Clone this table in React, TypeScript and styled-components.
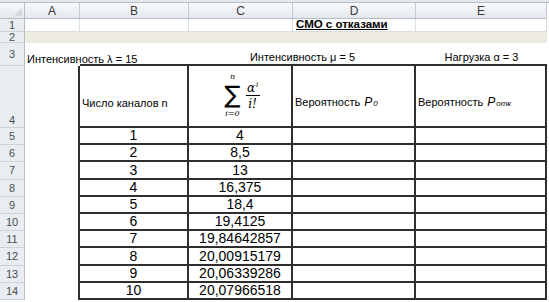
import React from 'react';
import styled, { createGlobalStyle } from 'styled-components';

const GlobalStyle = createGlobalStyle`
  html, body {
    margin: 0;
    padding: 0;
    background: #ffffff;
  }
  body {
    font-family: "Liberation Sans", Arial, sans-serif;
  }
`;

const Window = styled.div`
  width: 549px;
  height: 302px;
  overflow: hidden;
  background: #ffffff;
`;

const TopStrip = styled.div`
  height: 3px;
  box-sizing: border-box;
  background: #e3e7ec;
  border-bottom: 1px solid #b8c0ca;
`;

const Sheet = styled.div`
  display: grid;
  grid-template-columns: 25px 55px 109px 104px 123px 131px;
  grid-template-rows: 16px 13px 11px 23px 62px repeat(10, 17.2px);
  font-size: 11px;
  color: #000;
`;

const Corner = styled.div`
  position: relative;
  background: linear-gradient(#f7f8fa, #e4e8ed);
  border-right: 1px solid #b3bcc7;
  border-bottom: 1px solid #b3bcc7;
  box-sizing: border-box;
  &::after {
    content: '';
    position: absolute;
    right: 2px;
    bottom: 2px;
    border-left: 8px solid transparent;
    border-bottom: 8px solid #d2d7de;
  }
`;

const ColHead = styled.div`
  display: flex;
  align-items: center;
  justify-content: center;
  box-sizing: border-box;
  background: linear-gradient(#f8f9fb, #e4e8ed);
  border-right: 1px solid #c2c9d2;
  border-bottom: 1px solid #b3bcc7;
  font-size: 12px;
  color: #3a3a3a;
`;

const RowHead = styled.div<{ $bottom?: boolean }>`
  display: flex;
  align-items: ${(p) => (p.$bottom ? 'flex-end' : 'center')};
  justify-content: center;
  box-sizing: border-box;
  padding-bottom: ${(p) => (p.$bottom ? '1px' : '0')};
  background: #e9edf2;
  border-right: 1px solid #b3bcc7;
  border-bottom: 1px solid #cdd3db;
  font-size: 11px;
  color: #4b4f55;
`;

type HAlign = 'left' | 'center' | 'right';

const Cell = styled.div<{ $h?: HAlign; $fill?: string; $grid?: boolean; $span?: number; $frame?: 'right' | 'bottom' }>`
  display: flex;
  align-items: flex-end;
  justify-content: ${(p) => (p.$h === 'center' ? 'center' : p.$h === 'right' ? 'flex-end' : 'flex-start')};
  box-sizing: border-box;
  padding: 0 2px 1px;
  white-space: nowrap;
  overflow: visible;
  grid-column: ${(p) => (p.$span ? `span ${p.$span}` : 'auto')};
  background: ${(p) => p.$fill || 'transparent'};
  border-right: ${(p) =>
    p.$frame === 'right' ? '2px solid #2e2e2e' : p.$grid ? '1px solid #dadde2' : 'none'};
  border-bottom: ${(p) =>
    p.$frame === 'bottom' ? '2px solid #2e2e2e' : p.$grid ? '1px solid #dadde2' : 'none'};
`;

const Title = styled.span`
  font-weight: bold;
  text-decoration: underline;
  font-size: 11.5px;
  padding-left: 1px;
`;

const TableCell = styled.div<{ $h?: HAlign; $big?: boolean; $mid?: boolean }>`
  display: flex;
  align-items: ${(p) => (p.$mid ? 'center' : 'flex-end')};
  justify-content: ${(p) => (p.$h === 'center' ? 'center' : 'flex-start')};
  box-sizing: border-box;
  padding: ${(p) => (p.$mid ? '14px 2px 0' : '0 2px 0')};
  white-space: nowrap;
  border-right: 2px solid #2e2e2e;
  border-bottom: 2px solid #2e2e2e;
  font-size: ${(p) => (p.$big ? '14px' : '11px')};
  line-height: ${(p) => (p.$big ? '16px' : '13px')};
`;

const ProbLabel = styled.span`
  display: inline-flex;
  align-items: baseline;
  gap: 4px;
`;

const PLetter = styled.span`
  font-style: italic;
  font-size: 12px;
`;

const PIndex = styled.span`
  font-style: italic;
  font-size: 8px;
  margin-left: -2px;
`;

const Formula = styled.div`
  display: flex;
  align-items: center;
  gap: 5px;
  font-family: "DejaVu Serif", "Liberation Serif", serif;
  font-style: italic;
  margin-top: -16px;
  margin-left: 4px;
`;

const SumStack = styled.div`
  display: flex;
  flex-direction: column;
  align-items: center;
`;

const Limit = styled.span`
  font-size: 8px;
  line-height: 10px;
`;

const Sigma = styled.span`
  display: flex;
  align-items: center;
  justify-content: center;
  font-family: "DejaVu Sans", sans-serif;
  font-style: normal;
  font-size: 24px;
  line-height: 26px;
  height: 27px;
`;

const Fraction = styled.div`
  display: flex;
  flex-direction: column;
  align-items: center;
  font-size: 12px;
  line-height: 12px;
  margin-top: 1px;
`;

const Bar = styled.div`
  width: 14px;
  height: 1px;
  background: #000;
  margin: 1px 0 2px;
`;

const Sup = styled.sup`
  font-size: 7px;
  vertical-align: 5px;
  line-height: 0;
  margin-left: 1px;
`;

const BEIGE = '#eeece1';

const sums = [
  '4',
  '8,5',
  '13',
  '16,375',
  '18,4',
  '19,4125',
  '19,84642857',
  '20,00915179',
  '20,06339286',
  '20,07966518',
];

const App: React.FC = () => (
  <Window>
    <GlobalStyle />
    <TopStrip />
    <Sheet>
      <Corner />
      {['A', 'B', 'C', 'D', 'E'].map((c) => (
        <ColHead key={c}>{c}</ColHead>
      ))}

      <RowHead>1</RowHead>
      <Cell $grid />
      <Cell $grid />
      <Cell $grid />
      <Cell $grid>
        <Title>СМО с отказами</Title>
      </Cell>
      <Cell $grid />

      <RowHead>2</RowHead>
      {[0, 1, 2, 3, 4].map((i) => (
        <Cell key={i} $fill={BEIGE} />
      ))}

      <RowHead>3</RowHead>
      <Cell>Интенсивность λ = 15</Cell>
      <Cell $frame="bottom" />
      <Cell $frame="bottom" $span={2} $h="center">
        Интенсивность μ = 5
      </Cell>
      <Cell $frame="bottom" $h="center">
        Нагрузка α = 3
      </Cell>

      <RowHead $bottom>4</RowHead>
      <Cell $frame="right" />
      <TableCell $mid>Число каналов n</TableCell>
      <TableCell $h="center" $mid>
        <Formula>
          <SumStack>
            <Limit>n</Limit>
            <Sigma>∑</Sigma>
            <Limit>i=0</Limit>
          </SumStack>
          <Fraction>
            <span>
              α<Sup>i</Sup>
            </span>
            <Bar />
            <span>i!</span>
          </Fraction>
        </Formula>
      </TableCell>
      <TableCell $mid>
        <ProbLabel>
          Вероятность
          <span>
            <PLetter>P</PLetter> <PIndex>0</PIndex>
          </span>
        </ProbLabel>
      </TableCell>
      <TableCell $mid>
        <ProbLabel>
          Вероятность
          <span>
            <PLetter>P</PLetter> <PIndex>отк</PIndex>
          </span>
        </ProbLabel>
      </TableCell>

      {sums.map((s, i) => (
        <React.Fragment key={i}>
          <RowHead>{i + 5}</RowHead>
          <Cell $frame="right" />
          <TableCell $h="center" $big>
            {i + 1}
          </TableCell>
          <TableCell $h="center" $big>
            {s}
          </TableCell>
          <TableCell />
          <TableCell />
        </React.Fragment>
      ))}
    </Sheet>
  </Window>
);

export default App;
